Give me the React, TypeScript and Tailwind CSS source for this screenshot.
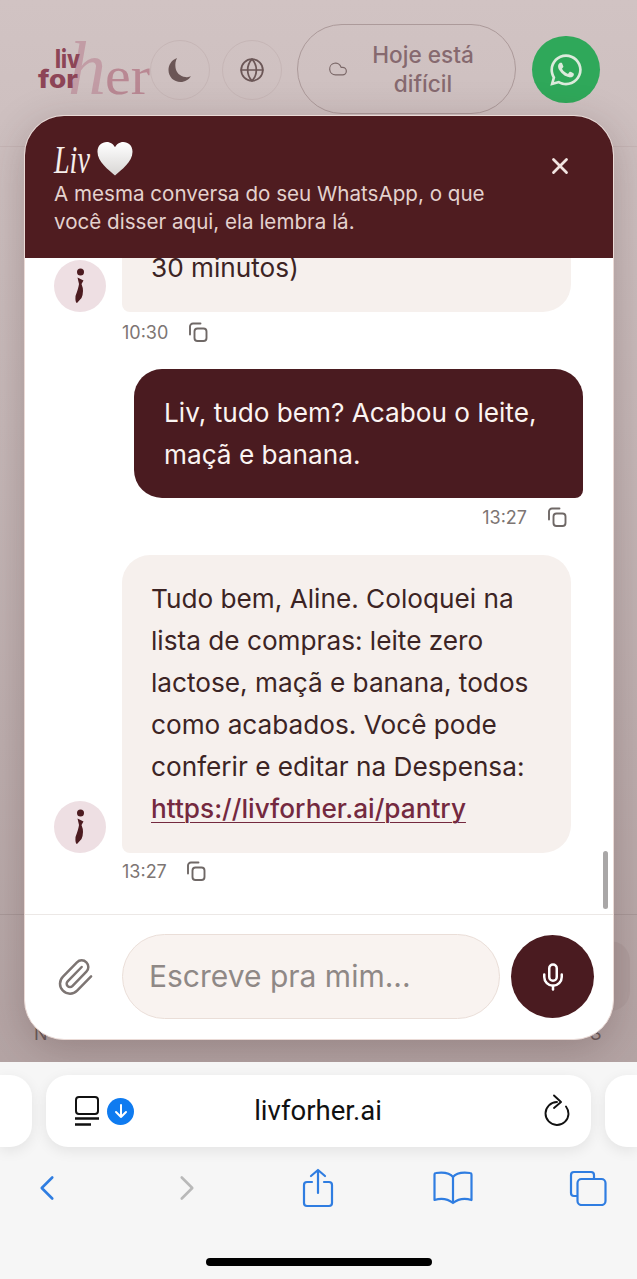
import { ChevronLeft, ChevronRight, Cloud, Globe, Mic, Paperclip, X } from 'lucide-react'
import { FaWhatsapp } from 'react-icons/fa'

function Logo() {
  return (
    <svg width="116" height="60" viewBox="0 0 116 60" className="shrink-0 overflow-visible">
      <text x="31" y="52" fontFamily="'Liberation Serif', serif" fontStyle="italic" fontSize="76" fill="#c29ca5" textLength="38" lengthAdjust="spacingAndGlyphs">
        h
      </text>
      <text x="68" y="52" fontFamily="'Liberation Serif', serif" fontSize="54" fill="#b98893" textLength="45" lengthAdjust="spacingAndGlyphs">
        er
      </text>
      <text x="18" y="26" fontFamily="Inter, sans-serif" fontWeight="800" fontSize="26" fill="#8d4557" textLength="25" lengthAdjust="spacingAndGlyphs">
        liv
      </text>
      <text x="1" y="46" fontFamily="Inter, sans-serif" fontWeight="800" fontSize="25" fill="#8d4557" textLength="40" lengthAdjust="spacingAndGlyphs">
        for
      </text>
    </svg>
  )
}

function Avatar() {
  return (
    <div className="flex h-[52px] w-[52px] shrink-0 items-center justify-center rounded-full bg-[#eedfe3]">
      <svg width="12" height="36" viewBox="0 0 12 36">
        <circle cx="6.500" cy="4" r="3.500" fill="#4c1b20" />
        <path d="M3.500 9.500 L9.500 12.500 L7.500 16 Q10.500 23 7.500 30 L3 35 Q1 34.500 1.500 28 Q4.500 20 5 16 Z" fill="#4c1b20" />
      </svg>
    </div>
  )
}

function CopyIcon() {
  return (
    <svg width="20" height="20" viewBox="0 0 20 20" fill="none" stroke="#6f6866" strokeWidth="1.900" strokeLinecap="round">
      <rect x="6.500" y="6.500" width="12" height="12.500" rx="3" />
      <path d="M2 12.500V4.500A3 3 0 0 1 5 1.500H12.500" />
    </svg>
  )
}

function Meta({ time, right, gap, top }: { time: string; right?: boolean; gap: string; top: string }) {
  return (
    <div className={`flex h-[24px] items-center ${right ? 'justify-end pr-[16px]' : 'pl-[68px]'} ${gap} ${top} text-[18px] text-[#7d7573]`}>
      <span>{time}</span>
      <CopyIcon />
    </div>
  )
}

function BotBubble({ lines }: { lines: React.ReactNode }) {
  return (
    <div className="flex shrink-0 items-end gap-[16px]">
      <Avatar />
      <div className="w-[449px] rounded-[28px] rounded-bl-[8px] bg-[#f6f0ed] px-[29px] py-[23px] text-[26.2px] leading-[42px] text-[#3c2424]">
        {lines}
      </div>
    </div>
  )
}

function ChatPanel() {
  return (
    <div className="absolute left-[24px] top-[115px] flex h-[925px] w-[590px] flex-col overflow-hidden rounded-[40px] border border-[#eadad6] bg-white shadow-[0_10px_40px_rgba(60,30,30,0.25)]">
      <div className="relative h-[142px] shrink-0 bg-[#4f1c20] px-[29px] pt-[22px]">
        <div className="flex h-[42px] items-center gap-[6px]">
          <span className="block w-[37px] origin-left scale-x-[0.72] font-['Liberation_Serif',serif] text-[39px] italic leading-none text-[#f6eeea]">Liv</span>
          <svg width="36" height="36" viewBox="0 0 37 36">
            <defs>
              <linearGradient id="heart" x1="0" y1="0" x2="0" y2="1">
                <stop offset="0" stopColor="#ffffff" />
                <stop offset="1" stopColor="#d8d6d4" />
              </linearGradient>
            </defs>
            <path d="M18.500 35 C12 29 0.500 21 0.500 10.500 C0.500 4 5 0.500 10 0.500 C14 0.500 17 3 18.500 6 C20 3 23 0.500 27 0.500 C32 0.500 36.500 4 36.500 10.500 C36.500 21 25 29 18.500 35 Z" fill="url(#heart)" />
          </svg>
        </div>
        <p className="text-[20.6px] leading-[28px] text-[#e4d2ce]">
          A mesma conversa do seu WhatsApp, o que
          <br />
          você disser aqui, ela lembra lá.
        </p>
        <X size={26} strokeWidth={2.6} className="absolute right-[40px] top-[37px] text-[#f0e4e0]" />
      </div>

      <div className="relative flex min-h-0 flex-1 flex-col justify-end overflow-hidden border-b border-[#ece8e6] pb-[31px] pl-[29px] pr-[30px]">
        <BotBubble lines="30 minutos)" />
        <Meta time="10:30" gap="gap-[20px]" top="mt-[8px]" />
        <div className="mt-[25px] flex shrink-0 justify-end">
          <div className="w-[449px] rounded-[28px] rounded-br-[8px] bg-[#4a1b20] px-[30px] py-[22.5px] text-[26.2px] leading-[42px] text-[#fbf4f1]">
            Liv, tudo bem? Acabou o leite, maçã e banana.
          </div>
        </div>
        <Meta time="13:27" right gap="gap-[20px]" top="mt-[7px]" />
        <div className="mt-[26px] shrink-0">
          <BotBubble
            lines={
              <>
                Tudo bem, Aline. Coloquei na lista de compras: leite zero lactose, maçã e banana, todos como acabados. Você pode conferir e editar na Despensa:{' '}
                <a className="font-medium text-[#74293f] underline decoration-[1px] underline-offset-[4px]">https://livforher.ai/pantry</a>
              </>
            }
          />
        </div>
        <Meta time="13:27" gap="gap-[19px]" top="mt-[6px]" />
        <div className="absolute bottom-[5px] right-[5px] h-[58px] w-[5px] rounded-full bg-[#a9a7a7]" />
      </div>

      <div className="flex h-[124px] shrink-0 items-center pb-[1px] pl-[30px] pr-[19px]">
        <Paperclip size={40} strokeWidth={1.5} className="mr-[27px] text-[#7d7573]" />
        <div className="flex h-[85px] w-[378px] items-center rounded-full border border-[#eaded8] bg-[#f9f3f0] pl-[26px] text-[30px] text-[#8f8886]">
          Escreve pra mim...
        </div>
        <div className="ml-[11px] flex h-[83px] w-[83px] items-center justify-center rounded-full bg-[#4a1b20]">
          <Mic size={30} strokeWidth={2} className="text-white" />
        </div>
      </div>
    </div>
  )
}

function PageBehind() {
  return (
    <>
      <div className="flex h-[147px] items-start border-b border-[#c5b5b5] pl-[37px] pt-[24px]">
        <div className="mt-[18px]">
          <Logo />
        </div>
        <div className="-ml-[3px] mt-[16px] flex h-[60px] w-[60px] items-center justify-center rounded-full border border-[#c6b6b6]">
          <svg width="24" height="26" viewBox="0 0 24 26">
            <path d="M9 1C3.500 3 0.500 8 0.500 13C0.500 20 6 25 12.500 25C17 25 21 22.500 23 19C21.500 20 19.500 20.500 17.500 20C12 19.500 8 15.500 7.500 10.500C7 7 7.500 4 9 1Z" fill="#6b5656" />
          </svg>
        </div>
        <div className="ml-[12px] mt-[16px] flex h-[60px] w-[60px] items-center justify-center rounded-full border border-[#c6b6b6]">
          <Globe size={26} strokeWidth={1.6} className="text-[#6b5656]" />
        </div>
        <div className="ml-[15px] flex h-[90px] w-[219px] items-center rounded-full border border-[#ac9a9a] pl-[30px]">
          <Cloud size={20} strokeWidth={1.4} className="text-[#7a6767]" />
          <span className="ml-[10px] w-[130px] text-center text-[22.6px] font-medium leading-[29px] text-[#86696f]">
            Hoje está difícil
          </span>
        </div>
        <div className="ml-[16px] mt-[12px] flex h-[67px] w-[68px] items-center justify-center rounded-full bg-[#2fa85a]">
          <FaWhatsapp size={36} className="text-[#dceadc]" />
        </div>
      </div>
      <div className="absolute left-0 right-0 top-[914px] h-px bg-[#a99999]" />
      <div className="absolute left-[590px] top-[941px] h-[70px] w-[40px] rounded-full bg-[#b09f9f]" />
      <span className="absolute left-[34px] top-[1020px] text-[18px] text-[#6b5b5b]">N</span>
      <span className="absolute left-[590px] top-[1020px] text-[18px] text-[#6b5b5b]">S</span>
    </>
  )
}

function SafariBar() {
  return (
    <div className="relative flex-1 bg-[#f6f6f6] text-[#2f7de1]">
      <div className="flex items-center justify-between pt-[13px]">
        <div className="h-[72px] w-[32px] rounded-r-[22px] bg-white shadow-[0_4px_14px_rgba(0,0,0,0.08)]" />
        <div className="flex h-[72px] w-[545px] items-center justify-between rounded-[22px] bg-white pl-[28px] pr-[21px] shadow-[0_4px_14px_rgba(0,0,0,0.08)]">
          <div className="flex w-[96px] items-center gap-[7px]">
            <svg width="26" height="30" viewBox="0 0 26 30" fill="none" stroke="#111" strokeWidth="2">
              <rect x="2" y="1" width="22" height="17" rx="3" />
              <path d="M1 22.500H25M1 28.500H17" strokeWidth="2.400" />
            </svg>
            <div className="flex h-[27px] w-[27px] shrink-0 items-center justify-center rounded-full bg-[#0f7bf0]">
              <svg width="14" height="16" viewBox="0 0 14 16" fill="none" stroke="#fff" strokeWidth="2" strokeLinecap="round" strokeLinejoin="round">
                <path d="M7 2V14M2 9L7 14L12 9" />
              </svg>
            </div>
          </div>
          <span className="font-['Roboto',sans-serif] text-[27.5px] text-[#111]">livforher.ai</span>
          <div className="flex w-[104px] justify-end">
            <svg width="26" height="34" viewBox="0 0 26 34" fill="none" stroke="#111" strokeWidth="1.900" strokeLinecap="round" strokeLinejoin="round">
              <path d="M13 8A11.500 11.500 0 1 0 24.500 20C24.500 17 23.500 14.500 22 12.500" />
              <path d="M10 1.500L17 8L10 14" />
            </svg>
          </div>
        </div>
        <div className="h-[72px] w-[32px] rounded-l-[22px] bg-white shadow-[0_4px_14px_rgba(0,0,0,0.08)]" />
      </div>
      <div className="flex items-center pl-[26px] pt-[20px]">
        <ChevronLeft size={42} strokeWidth={1.500} />
        <ChevronRight size={42} strokeWidth={1.500} className="ml-[98px] text-[#b9b9b9]" />
        <svg width="32" height="40" viewBox="0 0 32 40" fill="none" stroke="currentColor" strokeWidth="2.200" strokeLinecap="round" strokeLinejoin="round" className="ml-[94px]">
          <path d="M10 14H5a3 3 0 0 0-3 3v18a3 3 0 0 0 3 3h22a3 3 0 0 0 3-3V17a3 3 0 0 0-3-3h-5" />
          <path d="M16 25V2M9 8L16 2L23 8" />
        </svg>
        <svg width="40" height="34" viewBox="0 0 40 34" fill="none" stroke="currentColor" strokeWidth="2.200" strokeLinejoin="round" className="ml-[99px]">
          <path d="M20 6C17 2 11 1 3 2C2 2 1.500 3 1.500 4V29C8 27 15 28 20 32C25 28 32 27 38.500 29V4C38.500 3 38 2 37 2C29 1 23 2 20 6ZM20 6V32" />
        </svg>
        <svg width="38" height="36" viewBox="0 0 38 36" fill="none" stroke="currentColor" strokeWidth="2.200" className="ml-[96px]">
          <path d="M8 26H5a3 3 0 0 1-3-3V5a3 3 0 0 1 3-3h17a3 3 0 0 1 3 3v3" />
          <rect x="8.500" y="9" width="28" height="26" rx="4" />
        </svg>
      </div>
      <div className="absolute bottom-[13px] left-[206px] h-[8px] w-[226px] rounded-full bg-black" />
    </div>
  )
}

export default function App() {
  return (
    <div className="flex h-[1279px] w-[637px] flex-col overflow-hidden font-['Inter',sans-serif]">
      <div className="relative h-[1062px] shrink-0 bg-[linear-gradient(180deg,#d1c3c3_0%,#c6b8b8_40%,#b4a4a4_100%)]">
        <PageBehind />
        <ChatPanel />
      </div>
      <SafariBar />
    </div>
  )
}
